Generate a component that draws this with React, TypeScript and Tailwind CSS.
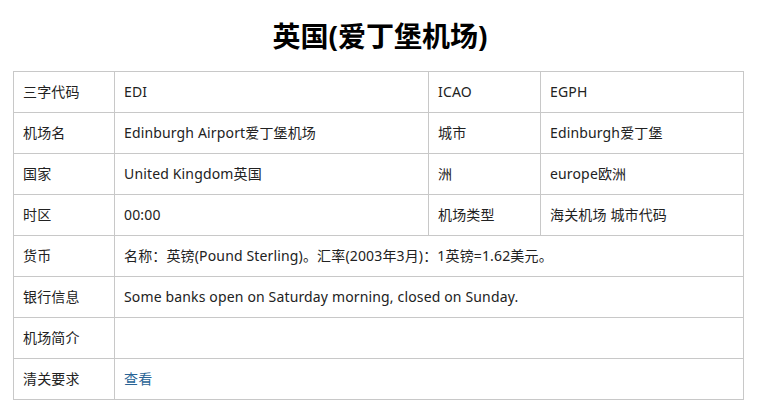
const rows: [string, React.ReactNode, string?, string?][] = [
  ['三字代码', 'EDI', 'ICAO', 'EGPH'],
  ['机场名', 'Edinburgh Airport爱丁堡机场', '城市', 'Edinburgh爱丁堡'],
  ['国家', 'United Kingdom英国', '洲', 'europe欧洲'],
  ['时区', '00:00', '机场类型', '海关机场 城市代码'],
];

const wideRows: [string, React.ReactNode][] = [
  ['货币', '名称：英镑(Pound Sterling)。汇率(2003年3月)：1英镑=1.62美元。'],
  ['银行信息', 'Some banks open on Saturday morning, closed on Sunday.'],
  ['机场简介', ''],
  ['清关要求', <a href="#" className="text-[#2a6496] no-underline">查看</a>],
];

const cell = 'border border-[#c8c8c8] h-[41px] px-[9px] pt-0 pb-[1px] text-left align-middle';

export default function App() {
  return (
    <div className="w-[760px] h-[414px] bg-white text-[#222] font-['Noto_Sans','Noto_Sans_CJK_SC',sans-serif] text-[14px]">
      <h1 className="pt-[16px] h-[71px] text-center text-[28px] font-bold text-black leading-[40px]">英国(爱丁堡机场)</h1>
      <table className="ml-[13px] w-[730px] table-fixed border-collapse tracking-[0.15px]">
        <colgroup>
          <col className="w-[101px]" />
          <col className="w-[314px]" />
          <col className="w-[112px]" />
          <col className="w-[203px]" />
        </colgroup>
        <tbody>
          {rows.map(r => (
            <tr key={r[0]}>
              <td className={cell}>{r[0]}</td>
              <td className={cell}>{r[1]}</td>
              <td className={cell}>{r[2]}</td>
              <td className={cell}>{r[3]}</td>
            </tr>
          ))}
          {wideRows.map(r => (
            <tr key={r[0]}>
              <td className={cell}>{r[0]}</td>
              <td className={cell} colSpan={3}>{r[1]}</td>
            </tr>
          ))}
        </tbody>
      </table>
    </div>
  );
}
